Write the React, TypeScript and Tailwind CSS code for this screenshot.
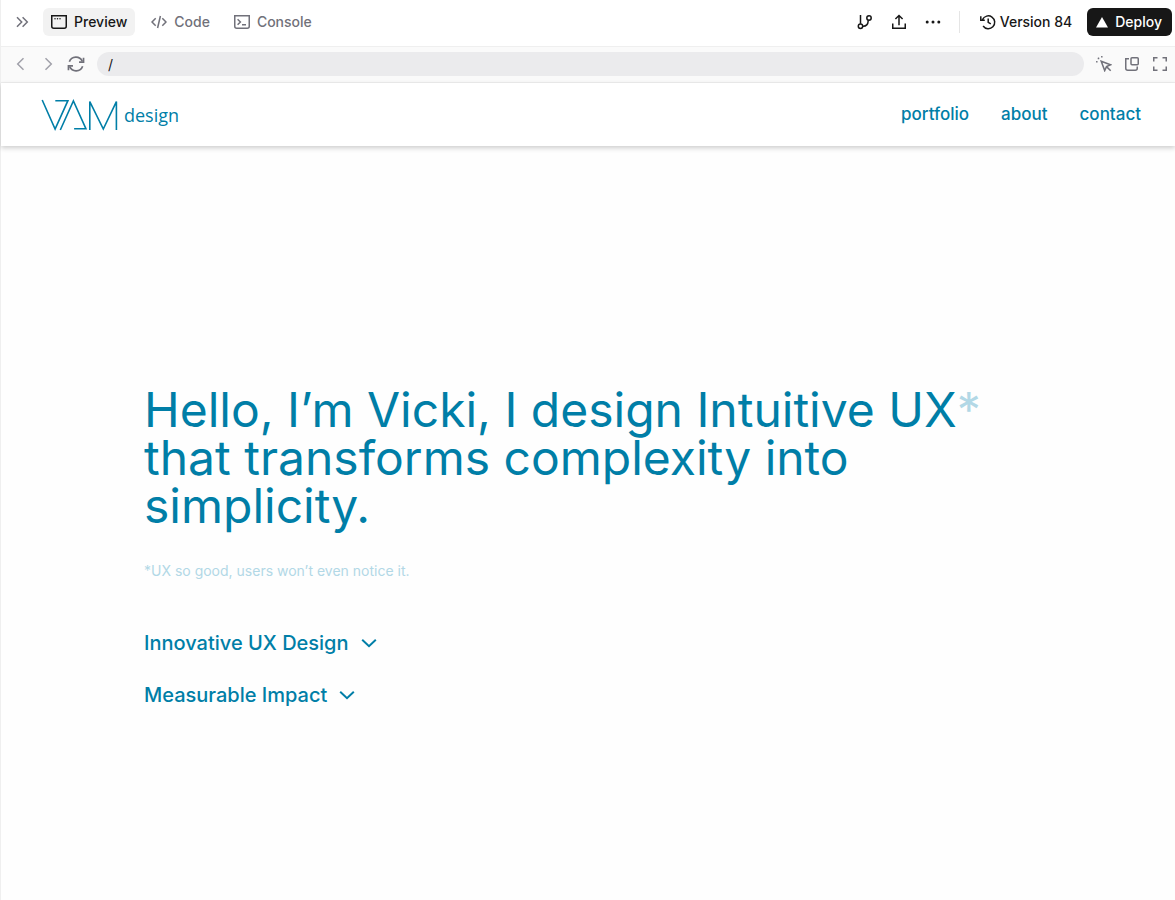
import React, { useState } from "react";

type IconProps = { children: React.ReactNode; className?: string; box?: string };

function Icon({ children, className = "size-4", box = "0 0 16 16" }: IconProps) {
  return (
    <svg
      viewBox={box}
      className={`${className} shrink-0`}
      fill="none"
      stroke="currentColor"
      strokeWidth="1.5"
      aria-hidden="true"
    >
      {children}
    </svg>
  );
}

const PreviewIcon = () => (
  <Icon>
    <path d="M.75 1.75h14.5v10.5a2 2 0 0 1-2 2H2.75a2 2 0 0 1-2-2z" />
    <g fill="currentColor" stroke="none">
      <circle cx="4" cy="4.75" r=".75" />
      <circle cx="6.5" cy="4.75" r=".75" />
      <circle cx="9" cy="4.75" r=".75" />
    </g>
  </Icon>
);

const CodeIcon = () => (
  <Icon>
    <path d="M4.7 4.2 1 8l3.7 3.8M11.3 4.2 15 8l-3.7 3.8M9.4 2 6.6 14" />
  </Icon>
);

const ConsoleIcon = () => (
  <Icon>
    <path d="M.75 1.75h14.5v10.5a2 2 0 0 1-2 2H2.75a2 2 0 0 1-2-2z" />
    <path d="m3.6 5.2 2.8 2.8-2.8 2.8M8 10.75h4" />
  </Icon>
);

const tabs = [
  { name: "Preview", icon: <PreviewIcon /> },
  { name: "Code", icon: <CodeIcon /> },
  { name: "Console", icon: <ConsoleIcon /> },
];

function Toolbar() {
  const [active, setActive] = useState("Preview");
  return (
    <div className="flex h-[46px] items-center justify-between bg-white pr-[3px] pb-0.5 pl-[7px] text-sm font-medium text-[#171717]">
      <div className="flex items-center gap-[7px]">
        <button aria-label="Collapse panel" className="flex size-7 items-center justify-center text-[#71717a]">
          <Icon>
            <path d="m3 3.2 4.7 4.8L3 12.8M8.6 3.2 13.3 8l-4.7 4.8" />
          </Icon>
        </button>
        <div className="flex items-center gap-2">
          {tabs.map((tab) => (
            <button
              key={tab.name}
              onClick={() => setActive(tab.name)}
              className={`flex h-7 items-center gap-[7px] rounded-md px-2 ${
                active === tab.name ? "bg-[#f2f2f2] text-[#171717]" : "text-[#71717a]"
              }`}
            >
              {tab.icon}
              {tab.name}
            </button>
          ))}
        </div>
      </div>
      <div className="flex items-center">
        <div className="flex items-center gap-1.5">
          <button aria-label="Branch" className="flex size-7 items-center justify-center">
            <Icon>
              <path d="M3.5 1v8.8" />
              <circle cx="3.5" cy="12.2" r="2.2" />
              <circle cx="12" cy="4" r="2.2" />
              <path d="M5.7 12.2h.8a4.6 4.6 0 0 0 4.6-4.6V6.2" />
            </Icon>
          </button>
          <button aria-label="Share" className="flex size-7 items-center justify-center">
            <Icon>
              <path d="M1.75 9.5v4.75h12.5V9.5M8 11.2V1.6M4.4 5 8 1.5 11.6 5" />
            </Icon>
          </button>
          <button aria-label="More" className="flex size-7 items-center justify-center">
            <Icon>
              <g fill="currentColor" stroke="none">
                <circle cx="2.2" cy="8" r="1.5" />
                <circle cx="8" cy="8" r="1.5" />
                <circle cx="13.8" cy="8" r="1.5" />
              </g>
            </Icon>
          </button>
        </div>
        <div className="mr-5 ml-3 h-[22px] w-px bg-[#e5e5e5]" />
        <button className="mr-[15px] flex h-7 items-center gap-1">
          <Icon>
            <path d="M2.5 5.6A6.4 6.4 0 1 1 3.1 12M.8 2.2v4h4M8.2 4.5v3.8l2.6 1.5" />
          </Icon>
          Version 84
        </button>
        <button className="flex h-7 items-center gap-[7px] rounded-md bg-[#171717] pr-2.5 pl-[9px] text-white">
          <svg viewBox="0 0 12 12" className="size-3 fill-white" aria-hidden="true">
            <path d="M6 1l6 10.4H0z" />
          </svg>
          Deploy
        </button>
      </div>
    </div>
  );
}

function AddressBar() {
  return (
    <div className="flex h-[37px] items-center gap-3 border-y border-[#efefef] bg-[#fafafa] pr-[7px] pb-px pl-3 text-[#71717a]">
      <div className="flex items-center gap-[11px]">
        <button aria-label="Back" className="text-[#a1a1aa]">
          <Icon><path d="m10.5 2.2-5.8 5.8 5.8 5.8" /></Icon>
        </button>
        <button aria-label="Forward" className="text-[#a1a1aa]">
          <Icon><path d="m5.5 2.2 5.8 5.8-5.8 5.8" /></Icon>
        </button>
        <button aria-label="Reload">
          <Icon className="size-[18px]">
            <path d="M2.1 6A6.2 6.2 0 0 1 13.6 5.6M13.9 10A6.2 6.2 0 0 1 2.4 10.4" />
            <path d="M14.7 2.4v3.9h-4M1.3 13.6V9.7h4" />
          </Icon>
        </button>
      </div>
      <input
        aria-label="Address"
        defaultValue="/"
        className="h-6 min-w-0 flex-1 rounded-full bg-[#ebebed] px-[11px] text-sm text-[#171717] outline-none"
      />
      <div className="flex items-center gap-3">
        <button aria-label="Select element">
          <Icon>
            <path d="m5.2 5.2 9.3 3.6-4 1.8-1.8 4z" />
            <path d="m10.5 10.6 4.2 4.2" />
            <g fill="currentColor" stroke="none">
              <rect x="5" y="0" width="1.6" height="1.6" rx=".5" />
              <rect x="1.7" y="1.6" width="1.6" height="1.6" rx=".5" />
              <rect x="0" y="5" width="1.6" height="1.6" rx=".5" />
            </g>
          </Icon>
        </button>
        <button aria-label="Open in new window">
          <Icon>
            <rect x="7" y="1.75" width="7.25" height="7" rx="1" />
            <path d="M5 2.75H1.75v9.5a2 2 0 0 0 2 2h7.5a2 2 0 0 0 2-2V10.5" />
          </Icon>
        </button>
        <button aria-label="Full screen">
          <Icon>
            <path d="M5.5 1.75h-3.75V5.5M10.5 1.75h3.75V5.5M5.5 14.25h-3.75V10.5M10.5 14.25h3.75V10.5" />
          </Icon>
        </button>
      </div>
    </div>
  );
}

function SiteHeader() {
  return (
    <header className="relative flex h-[63px] items-center justify-between bg-white pr-[34px] pl-10 text-[#007ea7] shadow-[0_2px_5px_rgba(0,0,0,0.2)]">
      <a href="#top" className="flex items-center gap-1.5">
        <svg
          viewBox="0 0 76 32"
          className="h-8 w-[77px]"
          fill="none"
          stroke="currentColor"
          strokeWidth="1.6"
          aria-label="VAM"
        >
          <path d="M.7 1 13.6 30 26.4 1.7H13.8" />
          <path d="M18.8 31 31.9 2 44.4 29.7H32.6" />
          <path d="M48.3 31V2.6L61.8 30 74.9 2.6V31" />
        </svg>
        <span className="font-[Open_Sans,sans-serif] text-lg font-normal">design</span>
      </a>
      <nav className="flex items-center gap-8 text-[17px] font-medium">
        <a href="#portfolio">portfolio</a>
        <a href="#about">about</a>
        <a href="#contact">contact</a>
      </nav>
    </header>
  );
}

function Disclosure({ title }: { title: string }) {
  const [open, setOpen] = useState(false);
  return (
    <button
      aria-expanded={open}
      onClick={() => setOpen(!open)}
      className="flex items-center gap-2.5 text-xl leading-7 font-medium"
    >
      {title}
      <Icon className="size-5" box="0 0 20 20">
        <path d="m3.2 6.8 6.8 6.4 6.8-6.4" strokeWidth="2" />
      </Icon>
    </button>
  );
}

export default function App() {
  return (
    <div className="flex min-h-screen flex-col border-l border-[#efefef] bg-[#fefefe] font-[Inter,sans-serif]">
      <Toolbar />
      <AddressBar />
      <SiteHeader />
      <main className="flex-1 px-[143px] pt-60 pb-16 text-[#007ea7]">
        <h1 className="max-w-4xl text-5xl leading-12 font-normal">
          Hello, I’m Vicki, I design Intuitive UX<span className="text-[#b2d8e6]">*</span>
          <br />
          that transforms complexity into
          <br />
          simplicity.
        </h1>
        <p className="mt-[31px] text-sm text-[#b2d8e6]">*UX so good, users won’t even notice it.</p>
        <div className="mt-12 flex flex-col items-start gap-6">
          <Disclosure title="Innovative UX Design" />
          <Disclosure title="Measurable Impact" />
        </div>
      </main>
    </div>
  );
}
